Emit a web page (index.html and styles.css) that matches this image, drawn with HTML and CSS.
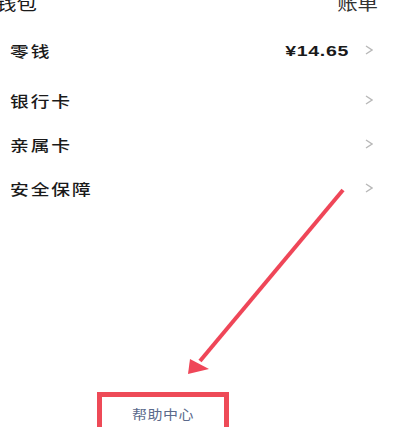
FILE: index.html
```
<!DOCTYPE html>
<html lang="zh">
<head>
    <meta charset="UTF-8">
    <meta name="viewport" content="width=device-width, initial-scale=1.0">
    <title>钱包</title>
    <link rel="stylesheet" href="styles.css">
</head>
<body>
<div class="header">
    <div class="title">钱包</div>
    <div class="bill">账单</div>
</div>
<div class="list">
    <div class="row first">
        <span class="label">零钱</span>
        <span class="amount">¥14.65</span>
        <svg class="chevron" width="8" height="10" viewBox="0 0 8 10"><polyline points="1,1 7,5 1,9"/></svg>
    </div>
    <div class="row">
        <span class="label">银行卡</span>
        <svg class="chevron" width="8" height="10" viewBox="0 0 8 10"><polyline points="1,1 7,5 1,9"/></svg>
    </div>
    <div class="row">
        <span class="label">亲属卡</span>
        <svg class="chevron" width="8" height="10" viewBox="0 0 8 10"><polyline points="1,1 7,5 1,9"/></svg>
    </div>
    <div class="row">
        <span class="label">安全保障</span>
        <svg class="chevron" width="8" height="10" viewBox="0 0 8 10"><polyline points="1,1 7,5 1,9"/></svg>
    </div>
</div>
<div class="help">
    <div class="help-box"><span class="help-text">帮助中心</span></div>
</div>
<svg class="arrow" width="400" height="427" viewBox="0 0 400 427">
    <line x1="343" y1="190" x2="200" y2="361"/>
    <polygon points="188,374 209,369 190,359"/>
</svg>
</body>
</html>
```

FILE: styles.css
```
body {
    margin: 0;
    font-family: "Noto Sans CJK SC", "Noto Sans", sans-serif;
    background-color: #ffffff;
    color: #1a1a1a;
    height: 427px;
    overflow: hidden;
    position: relative;
}
.header {
    display: flex;
    justify-content: space-between;
    margin-top: -6px;
    font-size: 17px;
    line-height: 17px;
}
.title {
    margin-left: -4px;
    transform: scaleX(1.2);
    transform-origin: left center;
}
.bill {
    color: #333333;
    margin-right: 22px;
    transform: scaleX(1.2);
    transform-origin: right center;
}
.list {
    margin-top: 17px;
    padding-left: 10px;
    padding-right: 27px;
}
.row {
    display: flex;
    align-items: center;
    height: 44px;
}
.row.first {
    margin-bottom: 6px;
}
.label {
    flex: 1;
    font-size: 15px;
    font-weight: 500;
    letter-spacing: 1.5px;
    transform: scaleX(1.25);
    transform-origin: left center;
}
.amount {
    font-family: "Liberation Sans", Arial, sans-serif;
    font-weight: bold;
    font-size: 15px;
    letter-spacing: 0.5px;
    margin-right: 16px;
    transform: scaleX(1.3);
    transform-origin: right center;
}
.chevron polyline {
    fill: none;
    stroke: #b8b8b8;
    stroke-width: 1.4;
}
.help {
    margin-top: 182px;
    padding-left: 97px;
}
.help-box {
    width: 122px;
    height: 40px;
    border: 5px solid #ee4a57;
    padding-top: 9px;
    text-align: center;
    font-size: 13px;
    line-height: 16px;
    color: #5b6a8c;
}
.help-text {
    display: inline-block;
    letter-spacing: 0.5px;
    transform: scaleX(1.15);
}
.arrow {
    position: absolute;
    left: 0;
    top: 0;
}
.arrow line {
    stroke: #ef4658;
    stroke-width: 4;
}
.arrow polygon {
    fill: #ef4658;
}
```
